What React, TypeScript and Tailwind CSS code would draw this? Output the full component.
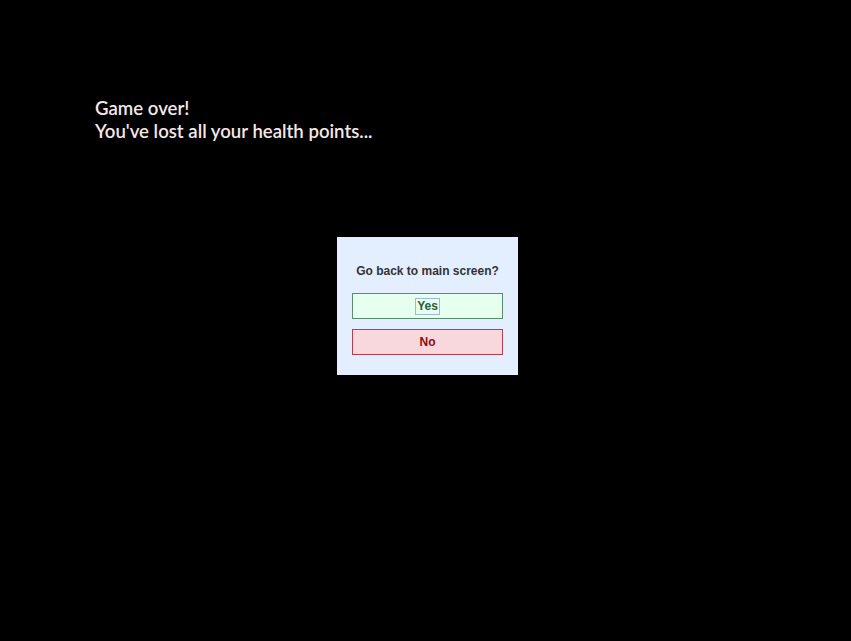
export default function App() {
    return (
        <div className="w-[851px] h-[641px] bg-black overflow-hidden flex flex-col">
            {/* Game over message */}
            <div className="pt-[97px] pl-[95px] text-[18.6px] leading-[23px] text-[#f6e7e7] font-['Lato','Noto_Sans',sans-serif] font-semibold">
                <p>Game over!</p>
                <p>You've lost all your health points...</p>
            </div>

            {/* Confirm dialog */}
            <div className="flex justify-center pl-[4px] mt-[94px]">
                <div className="w-[181px] bg-[#e3efff] px-[15px] pt-[26px] pb-[20px] flex flex-col font-['Liberation_Sans',Arial,sans-serif]">
                    <p className="text-center text-[12px] leading-[16px] font-bold text-[#333333]">Go back to main screen?</p>
                    <button className="mt-[14px] h-[26px] w-full bg-[#e6ffee] border border-[#5b8c6e] flex items-center justify-center">
                        <span className="px-[1px] border border-[#9cb9d6] text-[12px] leading-[15px] font-bold text-[#2d5a3d]">Yes</span>
                    </button>
                    <button className="mt-[10px] h-[26px] w-full bg-[#f8d8dd] border border-[#b3404d] flex items-center justify-center text-[12px] font-bold text-[#8b0a14]">
                        No
                    </button>
                </div>
            </div>
        </div>
    );
}
